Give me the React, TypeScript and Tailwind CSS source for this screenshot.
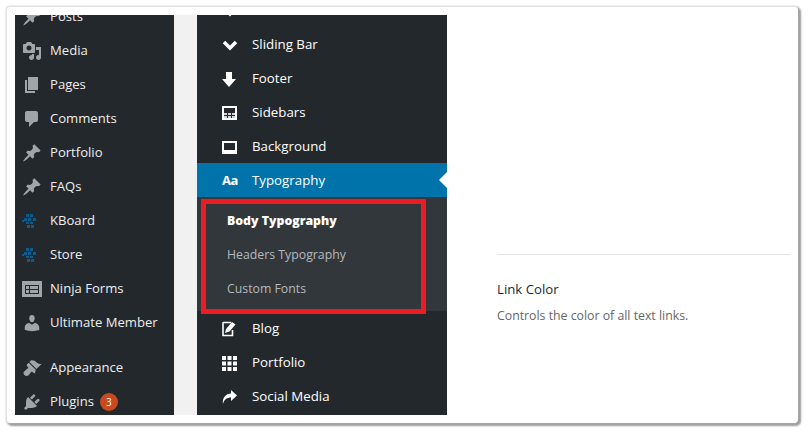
import type { ReactNode } from "react";

const dash = "w-[20px] h-[20px]";

const Pin = () => (
  <svg viewBox="0 0 20 20" className={dash} fill="currentColor">
    <path d="M10.440 3.020l1.820-1.820 6.360 6.350-1.830 1.820c-1.050-.68-2.480-.57-3.410.36l-.75.75c-.92.93-1.040 2.350-.35 3.410l-1.830 1.820-2.410-2.410-2.800 2.790c-.42.42-3.380 2.710-3.800 2.290s1.860-3.390 2.280-3.810l2.790-2.790L4.100 9.360l1.830-1.820c1.050.69 2.480.57 3.400-.36l.75-.75c.93-.92 1.040-2.350.36-3.410z" />
  </svg>
);

const Dots = () => (
  <svg viewBox="0 0 16 14" className="w-[16px] h-[14px]" fill="#0c5d8c">
    <rect x="4" y="0" width="3" height="3" />
    <rect x="8" y="0" width="3" height="3" />
    <rect x="2" y="4" width="3" height="3" />
    <rect x="6" y="4" width="3" height="3" />
    <rect x="11" y="4" width="3" height="3" />
    <rect x="0" y="6" width="2" height="2" />
    <rect x="4" y="8" width="3" height="2" />
    <rect x="8" y="8" width="3" height="2" />
    <rect x="5" y="11" width="3" height="3" />
    <rect x="9" y="11" width="3" height="3" />
  </svg>
);

const MediaIcon = () => (
  <svg viewBox="0 0 20 20" className={dash} fill="currentColor">
    <path d="M13 11V4c0-.55-.45-1-1-1h-1.670L9 1H5L3.670 3H2c-.55 0-1 .45-1 1v7c0 .55.45 1 1 1h10c.55 0 1-.45 1-1zM7 4.500c1.380 0 2.500 1.120 2.500 2.500S8.380 9.500 7 9.500 4.500 8.380 4.500 7 5.620 4.500 7 4.500zM14 6h5v10.500c0 1.380-1.120 2.500-2.500 2.500S14 17.880 14 16.500s1.120-2.500 2.500-2.500c.17 0 .34.02.5.05V9h-3V6zm-4 8.050V13h2v3.500c0 1.380-1.120 2.500-2.500 2.500S7 17.880 7 16.500 8.120 14 9.500 14c.17 0 .34.02.5.05z" />
  </svg>
);

const PagesIcon = () => (
  <svg viewBox="0 0 20 20" className={dash} fill="currentColor">
    <path d="M6 15V2h10v13H6zm-1 1h8v2H3V5h2v11z" />
  </svg>
);

const CommentIcon = () => (
  <svg viewBox="0 0 20 20" className={dash} fill="currentColor">
    <path d="M5 2h9c1.100 0 2 .9 2 2v7c0 1.100-.9 2-2 2h-2l-5 5v-5H5c-1.100 0-2-.9-2-2V4c0-1.100.9-2 2-2z" />
  </svg>
);

const UserIcon = () => (
  <svg viewBox="0 0 20 20" className={dash} fill="currentColor">
    <path d="M10 9.250c-2.270 0-2.730-3.440-2.730-3.440C7 4.020 7.820 2 9.970 2c2.160 0 2.980 2.020 2.710 3.810 0 0-.41 3.440-2.680 3.440zm0 2.570L12.720 10c2.390 0 4.520 2.330 4.520 4.530v2.490s-3.650 1.130-7.240 1.130c-3.650 0-7.240-1.130-7.240-1.130v-2.490c0-2.250 1.940-4.500 4.440-4.500z" />
  </svg>
);

const FormsIcon = () => (
  <svg viewBox="0 0 20 16" className="w-[20px] h-[16px]">
    <rect width="20" height="16" fill="#a0a5aa" />
    <rect x="3" y="4" width="14" height="9" fill="#23282d" />
    <rect x="4" y="5" width="3" height="3" fill="#a0a5aa" />
    <rect x="8" y="5" width="8" height="3" fill="#a0a5aa" />
    <rect x="4" y="9" width="3" height="3" fill="#a0a5aa" />
    <rect x="8" y="9" width="8" height="3" fill="#a0a5aa" />
  </svg>
);

const BrushIcon = () => (
  <svg viewBox="0 0 20 20" className={dash} fill="currentColor">
    <path d="M14.480 11.060L7.410 3.990l1.500-1.500c.5-.56 2.300-.47 3.510.32 1.210.8 1.430 1.280 2.910 2.100 1.180.64 2.450 1.260 4.450.850zm-.71.71L6.700 4.700 4.930 6.470c-.39.39-.39 1.020 0 1.410l1.060 1.060c.39.39.39 1.030 0 1.420-.6.600-1.430 1.110-2.210 1.690-.35.260-.700.530-1.010.840C1.430 13.710.960 15.650 2.390 17.080c1.430 1.430 3.370.96 4.210.14.310-.31.580-.66.840-1.010.58-.780 1.090-1.610 1.690-2.210.39-.39 1.030-.39 1.420 0l1.060 1.060c.39.39 1.020.39 1.410 0z" />
  </svg>
);

const PlugIcon = () => (
  <svg viewBox="0 0 20 20" className={dash} fill="currentColor">
    <path d="M13.110 4.360L9.870 7.600 8 5.730l3.240-3.240c.35-.34 1.050-.2 1.560.32.520.51.66 1.210.31 1.550zm-8 1.770l.91-1.120 9.010 9.010-1.190.84c-.71.710-2.630 1.160-3.820 1.160H6.140L4.900 17.260c-.59.59-1.540.59-2.120 0-.59-.58-.59-1.530 0-2.120l1.240-1.240v-3.880c0-1.130.4-3.070 1.090-3.890zm7.260 3.970l3.240-3.240c.34-.35 1.040-.21 1.550.31.520.51.66 1.210.31 1.550l-3.240 3.250z" />
  </svg>
);

const ChevronIcon = () => (
  <svg viewBox="0 0 16 11" className="w-[16px] h-[11px]" fill="none" stroke="#fff" strokeWidth="3.500">
    <path d="M2 2l6 6 6-6" />
  </svg>
);

const ArrowIcon = () => (
  <svg viewBox="0 0 14 15" className="w-[14px] h-[15px]" fill="#fff">
    <path d="M4 0h6v7h4l-7 8-7-8h4z" />
  </svg>
);

const SidebarsIcon = () => (
  <svg viewBox="0 0 15 14" className="w-[15px] h-[14px]">
    <rect width="15" height="14" fill="#fff" />
    <rect x="2" y="2" width="11" height="10" fill="#23282d" />
    <rect x="2" y="7" width="11" height="5" fill="#d5d7d9" />
    <path d="M2 9.500h11M5.500 7v5M9.500 7v5" stroke="#23282d" />
  </svg>
);

const BackgroundIcon = () => (
  <svg viewBox="0 0 15 13" className="w-[15px] h-[13px]">
    <rect width="15" height="13" fill="#fff" />
    <rect x="2" y="2" width="11" height="7" fill="#23282d" />
  </svg>
);

const BlogIcon = () => (
  <svg viewBox="0 0 14 16" className="w-[14px] h-[16px]" fill="none">
    <path d="M9 1.500H1.500a.5.5 0 00-.5.5v12.500h9.500V9" stroke="#fff" strokeWidth="1.600" />
    <path d="M3 12l1-4 6-7 3.500 2.500-6 7z" fill="#fff" />
  </svg>
);

const GridIcon = () => (
  <svg viewBox="0 0 15 15" className="w-[15px] h-[15px]" fill="#fff">
    <path d="M0 0h4v4H0zM5.500 0h4v4h-4zM11 0h4v4h-4zM0 5.500h4v4H0zM5.500 5.500h4v4h-4zM11 5.500h4v4h-4zM0 11h4v4H0zM5.500 11h4v4h-4zM11 11h4v4h-4z" />
  </svg>
);

const ShareIcon = () => (
  <svg viewBox="0 0 15 14" className="w-[15px] h-[14px]" fill="#fff">
    <path d="M9 0l6 5.500L9 11V7.500C5 7.500 2 9.500 1 14 0 8 4 3.500 9 3.500z" />
  </svg>
);

const leftItems: { label: string; icon: ReactNode; badge?: string; gap?: boolean }[] = [
  { label: "Posts", icon: <Pin /> },
  { label: "Media", icon: <MediaIcon /> },
  { label: "Pages", icon: <PagesIcon /> },
  { label: "Comments", icon: <CommentIcon /> },
  { label: "Portfolio", icon: <Pin /> },
  { label: "FAQs", icon: <Pin /> },
  { label: "KBoard", icon: <Dots /> },
  { label: "Store", icon: <Dots /> },
  { label: "Ninja Forms", icon: <FormsIcon /> },
  { label: "Ultimate Member", icon: <UserIcon /> },
  { label: "Appearance", icon: <BrushIcon />, gap: true },
  { label: "Plugins", icon: <PlugIcon />, badge: "3" },
];

const topItems = [
  { label: "", icon: <ChevronIcon /> },
  { label: "Sliding Bar", icon: <ChevronIcon /> },
  { label: "Footer", icon: <ArrowIcon /> },
  { label: "Sidebars", icon: <SidebarsIcon /> },
  { label: "Background", icon: <BackgroundIcon /> },
];

const bottomItems = [
  { label: "Blog", icon: <BlogIcon /> },
  { label: "Portfolio", icon: <GridIcon /> },
  { label: "Social Media", icon: <ShareIcon /> },
];

function OptionRow({ label, icon }: { label: string; icon: ReactNode }) {
  return (
    <div className="h-[34px] pt-[2px] flex items-center text-white">
      <div className="w-[55px] pl-[25px] flex items-center justify-start">{icon}</div>
      <span>{label}</span>
    </div>
  );
}

export default function App() {
  return (
    <div className="w-[811px] h-[436px] bg-white overflow-hidden pt-[6px] pl-[6px] font-['Open_Sans',sans-serif] text-[13px]">
      <div className="w-[792px] h-[417px] rounded-[4px] bg-white border-t border-l border-[#e2e2e2] shadow-[0_0_2px_#cccccc,2px_2px_2px_1px_#9a9a9a] pt-[8px] pl-[8px]">
        <div className="h-[400px] flex overflow-hidden">
          {/* wp admin menu */}
          <div className="w-[159px] bg-[#23282d] text-[#eeeeee] text-[13.1px] overflow-hidden shrink-0">
            <div className="-mt-[15px]">
              {leftItems.map((item) => (
                <div key={item.label} className={`h-[34px] flex items-center ${item.gap ? "mt-[11px]" : ""}`}>
                  <div className="w-[35px] pl-[7px] flex items-center justify-start text-[#a0a5aa]">{item.icon}</div>
                  <span>{item.label}</span>
                  {item.badge && (
                    <span className="ml-[6px] w-[18px] h-[18px] rounded-full bg-[#ca4a1f] text-white text-[10px] flex items-center justify-center">
                      {item.badge}
                    </span>
                  )}
                </div>
              ))}
            </div>
          </div>

          <div className="w-[23px] bg-[#f1f1f1] shrink-0" />

          {/* theme options menu */}
          <div className="w-[250px] bg-[#23282d] text-[13.3px] shrink-0 overflow-hidden relative">
            <div className="-mt-[22px]">
              {topItems.map((item, i) => (
                <OptionRow key={i} label={item.label} icon={item.icon} />
              ))}
              <div className="h-[34px] pt-[2px] flex items-center bg-[#0073aa] text-white relative">
                <div className="w-[55px] pl-[25px] font-bold text-[13px] tracking-[-0.5px]">Aa</div>
                <span>Typography</span>
                <div className="absolute right-0 top-[9px] border-y-[8px] border-y-transparent border-r-[8px] border-r-white" />
              </div>
              <div className="h-[114px] bg-[#32373c] pl-[30px] pt-[7px] text-[12.3px] text-[#b4b9be]">
                <div className="h-[34px] flex items-center text-white font-extrabold">Body Typography</div>
                <div className="h-[34px] flex items-center">Headers Typography</div>
                <div className="h-[34px] flex items-center">Custom Fonts</div>
              </div>
              {bottomItems.map((item) => (
                <OptionRow key={item.label} label={item.label} icon={item.icon} />
              ))}
            </div>
            <div className="absolute left-[4px] top-[184px] w-[225px] h-[115px] border-[5px] border-[#ed1c24]" />
          </div>

          {/* option panel */}
          <div className="flex-1 pl-[50px] pr-[8px] pt-[239px]">
            <div className="border-t border-[#e5e5e5]" />
            <div className="mt-[25px] text-[#23282d] font-medium text-[13.2px] leading-[18px]">Link Color</div>
            <div className="mt-[10px] text-[12.3px] text-[#666666] leading-[16px]">Controls the color of all text links.</div>
          </div>
        </div>
      </div>
    </div>
  );
}
